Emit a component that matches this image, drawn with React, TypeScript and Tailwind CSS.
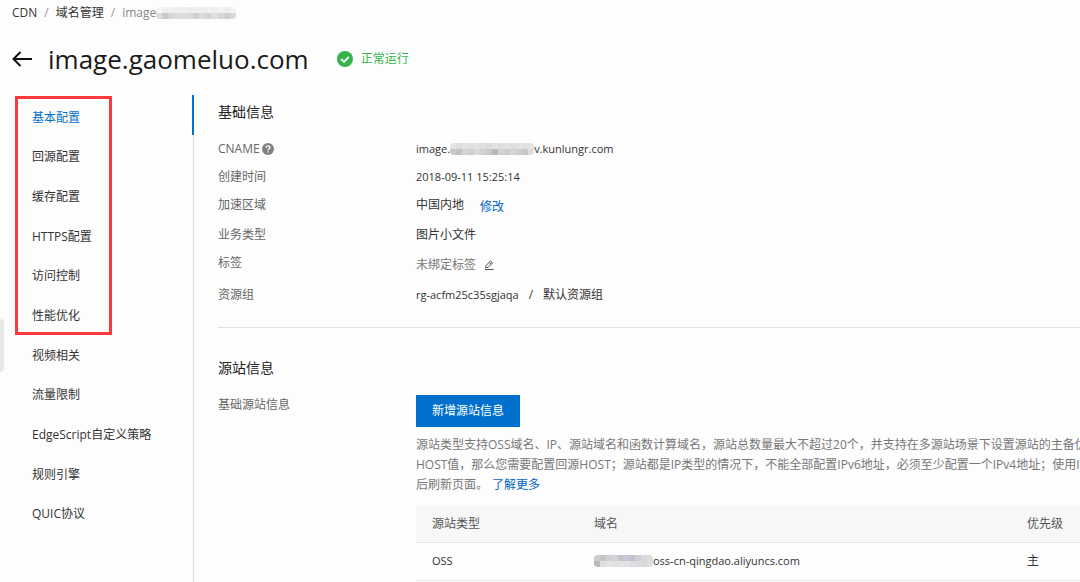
import React from 'react';

const navItems: string[] = [
  '基本配置',
  '回源配置',
  '缓存配置',
  'HTTPS配置',
  '访问控制',
  '性能优化',
  '视频相关',
  '流量限制',
  'EdgeScript自定义策略',
  '规则引擎',
  'QUIC协议',
];

const breadcrumbMosaic: string[][] = [
  ['#f5f5f5', '#efefef', '#f1f1f1', '#eeeeee', '#f0eff0', '#ededee', '#efefef', '#eeeeee', '#f0f0f0', '#eeeeee', '#f1f1f1', '#efefef', '#f3f3f3'],
  ['#dddcdc', '#c9c8c8', '#d6d6d6', '#dadcde', '#d8dfea', '#e0d9d3', '#cfd0d8', '#dcdcdc', '#d3d2d6', '#dfdfdf', '#d6d6d6', '#d0d0d0', '#d9d9dc'],
];
const cnameMosaic: string[][] = [
  ['#e2e2e2', '#dedede', '#e2e2e2', '#e0e0e0', '#e3e2e2', '#e0dfe0', '#dcdcdd', '#e2e2e2', '#dfdfdf', '#e1e1e1', '#dfdfdf', '#e2e2e2', '#e0e0e0', '#e3e3e3'],
  ['#c9c9c9', '#c3c2c2', '#d5d4d4', '#cfcfcf', '#dadada', '#d3cfd0', '#c8c8d0', '#b9b8bf', '#d4d3d3', '#cccccc', '#d8d5d1', '#cdcdcd', '#c7c7cb', '#dcdcdc'],
];
const originMosaic: string[][] = [
  ['#cfcbcb', '#c8c4c3', '#d2cfcd', '#cfd5da', '#c5c5cc', '#c6c9d4', '#bfc3d3', '#d2d0d3', '#d6dbe2', '#dcdcdc'],
  ['#bdb8ba', '#dedcdc', '#e3e3e3', '#e0e0e0', '#e5e3e0', '#e2e2e6', '#dcdde0', '#dddddd', '#d9dadd', '#dedede'],
];

/** Pixelated strip that hides a private part of a domain name. */
function Mosaic({ rows, className }: { rows: string[][]; className: string }) {
  return (
    <svg
      className={className}
      viewBox={`0 0 ${rows[0].length} ${rows.length}`}
      preserveAspectRatio="none"
      shapeRendering="crispEdges"
      aria-hidden="true"
    >
      {rows.map((row, y) =>
        row.map((fill, x) => <rect key={`${x}-${y}`} x={x} y={y} width="1" height="1" fill={fill} />),
      )}
    </svg>
  );
}

function Breadcrumb() {
  return (
    <nav aria-label="面包屑" className="flex h-6 items-center gap-[7px] px-3 pt-0.5">
      <a href="#cdn">CDN</a>
      <span className="text-[#999]">/</span>
      <a href="#domains">域名管理</a>
      <span className="text-[#999]">/</span>
      <span className="flex items-center text-[#888]">
        image
        <Mosaic rows={breadcrumbMosaic} className="h-3 w-20 rounded-sm" />
      </span>
    </nav>
  );
}

function TitleBar() {
  return (
    <header className="flex h-[71px] items-center px-3 pb-px">
      <button type="button" aria-label="返回" className="mr-4 text-[#111]">
        <svg width="20" height="16" viewBox="0 0 20 16" fill="none" stroke="currentColor" strokeWidth="2">
          <path d="M20 8H1.5M8.5 1L1.5 8L8.5 15" />
        </svg>
      </button>
      <h1 className="mr-7 text-[26px] leading-9 text-[#1a1a1a]">image.gaomeluo.com</h1>
      <span className="flex items-center gap-2 text-[#35b34a]">
        <svg width="16" height="16" viewBox="0 0 16 16" aria-hidden="true">
          <circle cx="8" cy="8" r="8" fill="#35b34a" />
          <path d="M4.2 8.2L7 10.9L11.8 5.8" fill="none" stroke="#fff" strokeWidth="1.8" />
        </svg>
        正常运行
      </span>
    </header>
  );
}

function SideNav() {
  return (
    <nav aria-label="域名配置" className="relative w-[194px] shrink-0">
      <div className="absolute inset-y-0 right-0 w-px bg-[#dcdcdc]" />
      <ul className="relative flex h-[436px] flex-col">
        {navItems.map((item, i) => (
          <li key={item} className="flex flex-1">
            <a
              href={`#nav-${i}`}
              aria-current={i === 0 ? 'page' : undefined}
              className={
                i === 0
                  ? 'flex flex-1 items-center border-r-2 border-[#0070cc] pt-1.5 pl-8 text-[#0070cc]'
                  : 'flex flex-1 items-center pt-1.5 pl-8'
              }
            >
              {item}
            </a>
          </li>
        ))}
      </ul>
      <div className="pointer-events-none absolute top-px left-[15px] h-[239px] w-[97px] border-3 border-[#fb3a3d]" />
    </nav>
  );
}

function Row({ label, children }: { label: React.ReactNode; children: React.ReactNode }) {
  return (
    <div className="flex pb-2">
      <dt className="flex h-5 w-[198px] shrink-0 items-center gap-0.5 text-[#666]">{label}</dt>
      <dd className="flex items-center">{children}</dd>
    </div>
  );
}

function BasicInfo() {
  return (
    <section className="border-b border-[#e0e0e0] pt-1.5 pb-3.5">
      <h2 className="text-sm leading-[22px] text-[#222]">基础信息</h2>
      <dl className="pt-4">
        <Row
          label={
            <>
              CNAME
              <svg width="12" height="12" viewBox="0 0 12 12" aria-hidden="true">
                <circle cx="6" cy="6" r="6" fill="#808080" />
                <path
                  d="M4.1 4.7C4.1 2.2 7.9 2.2 7.9 4.6C7.9 5.8 6 5.9 6 7.3M6 8.3V9.6"
                  fill="none"
                  stroke="#fff"
                  strokeWidth="1.3"
                />
              </svg>
            </>
          }
        >
          <span className="flex items-center text-[11px] leading-5">
            image.
            <Mosaic rows={cnameMosaic} className="h-3 w-[84px] rounded-sm" />
            v.kunlungr.com
          </span>
        </Row>
        <Row label="创建时间">
          <span className="text-[11px] leading-5">2018-09-11 15:25:14</span>
        </Row>
        <Row label="加速区域">
          <span className="pb-0.5">中国内地</span>
          <a href="#region" className="ml-4 pt-0.5 text-[#0064c8]">
            修改
          </a>
        </Row>
        <Row label="业务类型">图片小文件</Row>
        <Row label="标签">
          <span className="leading-6 text-[#777]">未绑定标签</span>
          <button type="button" aria-label="编辑标签" className="ml-2 text-[#555]">
            <svg width="10" height="10" viewBox="0 0 10 10" fill="none" stroke="currentColor">
              <path d="M1.5 7.8L2 5.6L6.4 1L8.6 2.8L4.2 7.3L1.5 7.8ZM5.2 2.4L7.3 4.2M1 9.5H9.5" />
            </svg>
          </button>
        </Row>
        <Row label="资源组">
          <span className="text-[11px] leading-5">rg-acfm25c35sgjaqa</span>
          <span className="mx-2.5">/</span>默认资源组
        </Row>
      </dl>
    </section>
  );
}

function OriginInfo() {
  return (
    <section className="pt-[29px]">
      <h2 className="text-sm leading-[22px] text-[#222]">源站信息</h2>
      <div className="flex pt-4">
        <h3 className="w-[198px] shrink-0 text-[#666]">基础源站信息</h3>
        <div className="min-w-0 flex-1">
          <button type="button" className="block h-8 bg-[#0070cc] px-4 text-white">
            新增源站信息
          </button>
          <p className="overflow-hidden pt-2 whitespace-nowrap text-[#777]">
            源站类型支持OSS域名、IP、源站域名和函数计算域名，源站总数量最大不超过20个，并支持在多源站场景下设置源站的主备优
            <br />
            HOST值，那么您需要配置回源HOST；源站都是IP类型的情况下，不能全部配置IPv6地址，必须至少配置一个IPv4地址；使用IP
            <br />
            后刷新页面。
            <a href="#more" className="ml-1 text-[#0064c8]">
              了解更多
            </a>
          </p>
          <table className="mt-[11px] w-full table-fixed border-collapse text-left">
            <thead>
              <tr className="h-9 border-b border-[#e5e5e5] bg-[#f7f7f7] text-[#555]">
                <th className="w-[162px] pl-4 font-normal">源站类型</th>
                <th className="pl-4 font-normal">域名</th>
                <th className="w-[69px] pl-4 font-normal">优先级</th>
              </tr>
            </thead>
            <tbody>
              <tr className="h-[38px] border-b border-[#e5e5e5]">
                <td className="pl-4 text-[11px]">OSS</td>
                <td className="pl-4">
                  <span className="flex items-center text-[11px] leading-5">
                    <Mosaic rows={originMosaic} className="h-3 w-[59px] rounded-sm" />
                    oss-cn-qingdao.aliyuncs.com
                  </span>
                </td>
                <td className="pl-4">主</td>
              </tr>
            </tbody>
          </table>
        </div>
      </div>
    </section>
  );
}

export default function App() {
  return (
    <div className="relative flex min-h-screen flex-col bg-[#fdfdfd] font-['Open_Sans','Noto_Sans_CJK_SC',sans-serif] text-xs leading-5 text-[#333]">
      <Breadcrumb />
      <TitleBar />
      <div className="flex flex-1">
        <SideNav />
        <main className="min-w-0 flex-1 pl-6">
          <BasicInfo />
          <OriginInfo />
        </main>
      </div>
      <div className="absolute top-[319px] left-0 h-[53px] w-1 rounded-r bg-[#e8e8e8]" />
    </div>
  );
}
